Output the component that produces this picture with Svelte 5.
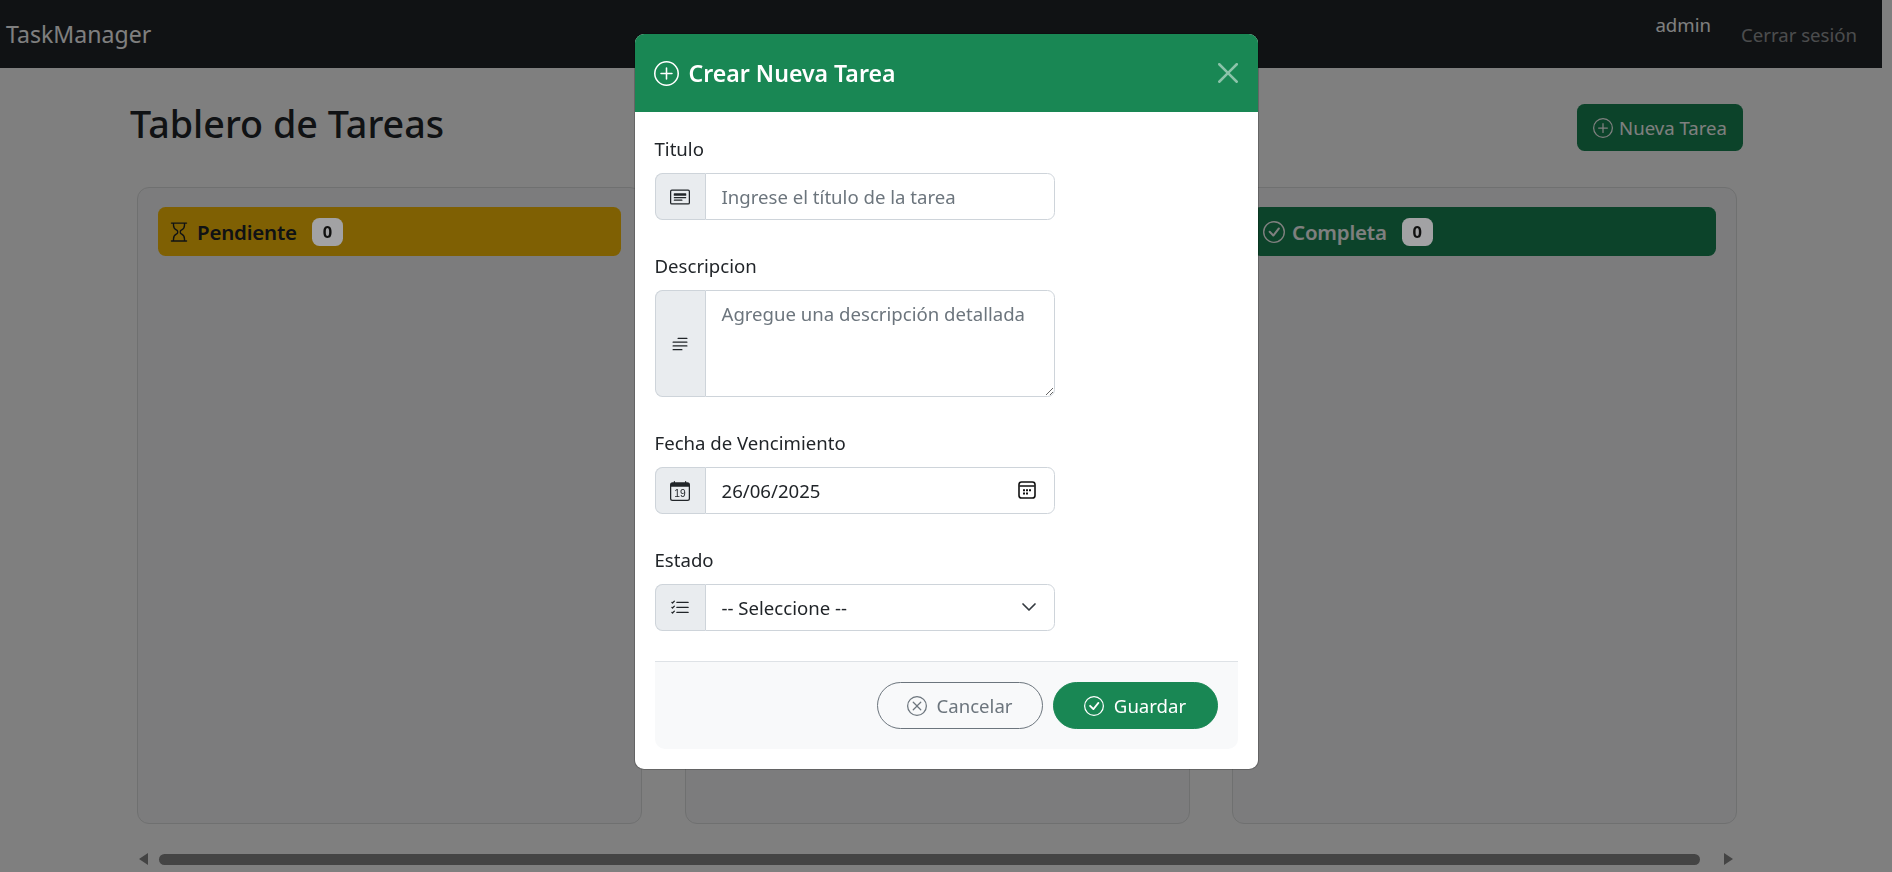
<script>
  const columns = [
    { name: 'Pendiente', tone: 'pending', icon: 'hourglass' },
    { name: 'En Progreso', tone: 'progress', icon: 'hourglass' },
    { name: 'Completa', tone: 'done', icon: 'check' }
  ];
</script>

{#snippet plusCircle()}
  <svg class="bi" viewBox="0 0 16 16" fill="currentColor" aria-hidden="true">
    <path d="M8 15A7 7 0 1 1 8 1a7 7 0 0 1 0 14zm0 1A8 8 0 1 0 8 0a8 8 0 0 0 0 16z"/>
    <path d="M8 4a.5.5 0 0 1 .5.5v3h3a.5.5 0 0 1 0 1h-3v3a.5.5 0 0 1-1 0v-3h-3a.5.5 0 0 1 0-1h3v-3A.5.5 0 0 1 8 4z"/>
  </svg>
{/snippet}

{#snippet checkCircle()}
  <svg class="bi" viewBox="0 0 16 16" fill="currentColor" aria-hidden="true">
    <path d="M8 15A7 7 0 1 1 8 1a7 7 0 0 1 0 14zm0 1A8 8 0 1 0 8 0a8 8 0 0 0 0 16z"/>
    <path d="M10.97 4.97a.235.235 0 0 0-.02.022L7.477 9.417 5.384 7.323a.75.75 0 0 0-1.06 1.06L6.97 11.03a.75.75 0 0 0 1.079-.02l3.992-4.99a.75.75 0 0 0-1.071-1.05z"/>
  </svg>
{/snippet}

{#snippet xCircle()}
  <svg class="bi" viewBox="0 0 16 16" fill="currentColor" aria-hidden="true">
    <path d="M8 15A7 7 0 1 1 8 1a7 7 0 0 1 0 14zm0 1A8 8 0 1 0 8 0a8 8 0 0 0 0 16z"/>
    <path d="M4.646 4.646a.5.5 0 0 1 .708 0L8 7.293l2.646-2.647a.5.5 0 0 1 .708.708L8.707 8l2.647 2.646a.5.5 0 0 1-.708.708L8 8.707l-2.646 2.647a.5.5 0 0 1-.708-.708L7.293 8 4.646 5.354a.5.5 0 0 1 0-.708z"/>
  </svg>
{/snippet}

{#snippet hourglass()}
  <svg class="bi" viewBox="0 0 16 16" fill="currentColor" aria-hidden="true">
    <path d="M2 1.5a.5.5 0 0 1 .5-.5h11a.5.5 0 0 1 0 1h-1v1a4.5 4.5 0 0 1-2.557 4.06c-.29.139-.443.377-.443.59v.7c0 .213.154.451.443.59A4.5 4.5 0 0 1 12.5 13v1h1a.5.5 0 0 1 0 1h-11a.5.5 0 1 1 0-1h1v-1a4.5 4.5 0 0 1 2.557-4.06c.29-.139.443-.377.443-.59v-.7c0-.213-.154-.451-.443-.59A4.5 4.5 0 0 1 3.5 3V2h-1a.5.5 0 0 1-.5-.5zm2.5.5v1a3.5 3.5 0 0 0 1.989 3.158c.533.256 1.011.791 1.011 1.491v.702c0 .7-.478 1.235-1.011 1.491A3.5 3.5 0 0 0 4.5 13v1h7v-1a3.5 3.5 0 0 0-1.989-3.158C8.978 9.586 8.5 9.052 8.5 8.351v-.702c0-.7.478-1.235 1.011-1.491A3.5 3.5 0 0 0 11.5 3V2h-7z"/>
  </svg>
{/snippet}

<div class="page">
  <nav class="navbar">
    <span class="brand">TaskManager</span>
    <div class="nav-right">
      <span class="user">admin</span>
      <span class="logout">Cerrar sesión</span>
    </div>
  </nav>

  <main class="content">
    <div class="title-row">
      <h1>Tablero de Tareas</h1>
      <button class="new-task" type="button">{@render plusCircle()} Nueva Tarea</button>
    </div>

    <div class="board">
      {#each columns as col}
        <section class="column">
          <header class="col-head {col.tone}">
            {#if col.icon === 'check'}{@render checkCircle()}{:else}{@render hourglass()}{/if}
            <span class="col-name">{col.name}</span>
            <span class="badge">0</span>
          </header>
        </section>
      {/each}
    </div>

    <div class="scrollbar" aria-hidden="true">
      <span class="arrow left"></span>
      <span class="thumb"></span>
      <span class="arrow right"></span>
    </div>
  </main>
</div>

<div class="backdrop"></div>

<div class="modal-wrap">
  <div class="modal">
    <div class="modal-head">
      <h2>{@render plusCircle()} Crear Nueva Tarea</h2>
      <svg class="close" viewBox="0 0 16 16" fill="currentColor" aria-label="Cerrar">
        <path d="M.293.293a1 1 0 0 1 1.414 0L8 6.586 14.293.293a1 1 0 1 1 1.414 1.414L9.414 8l6.293 6.293a1 1 0 0 1-1.414 1.414L8 9.414l-6.293 6.293a1 1 0 0 1-1.414-1.414L6.586 8 .293 1.707a1 1 0 0 1 0-1.414z"/>
      </svg>
    </div>
    <form class="modal-body">
      <div class="field">
        <label for="t">Titulo</label>
        <div class="group">
          <span class="addon">
            <svg class="bi" viewBox="0 0 16 16" fill="currentColor" aria-hidden="true">
              <path d="M14.5 3a.5.5 0 0 1 .5.5v9a.5.5 0 0 1-.5.5h-13a.5.5 0 0 1-.5-.5v-9a.5.5 0 0 1 .5-.5h13zm-13-1A1.5 1.5 0 0 0 0 3.5v9A1.5 1.5 0 0 0 1.5 14h13a1.5 1.5 0 0 0 1.5-1.5v-9A1.5 1.5 0 0 0 14.5 2h-13z"/>
              <path d="M3 8.5a.5.5 0 0 1 .5-.5h9a.5.5 0 0 1 0 1h-9a.5.5 0 0 1-.5-.5zm0 2a.5.5 0 0 1 .5-.5h6a.5.5 0 0 1 0 1h-6a.5.5 0 0 1-.5-.5zm0-5a.5.5 0 0 1 .5-.5h9a.5.5 0 0 1 .5.5v1a.5.5 0 0 1-.5.5h-9a.5.5 0 0 1-.5-.5v-1z"/>
            </svg>
          </span>
          <input id="t" class="control" type="text" placeholder="Ingrese el título de la tarea" />
        </div>
      </div>

      <div class="field">
        <label for="d">Descripcion</label>
        <div class="group">
          <span class="addon">
            <svg class="bi" viewBox="0 0 16 16" fill="currentColor" aria-hidden="true">
              <path fill-rule="evenodd" d="M2 12.5a.5.5 0 0 1 .5-.5h7a.5.5 0 0 1 0 1h-7a.5.5 0 0 1-.5-.5zm0-3a.5.5 0 0 1 .5-.5h11a.5.5 0 0 1 0 1h-11a.5.5 0 0 1-.5-.5zm0-3a.5.5 0 0 1 .5-.5h11a.5.5 0 0 1 0 1h-11a.5.5 0 0 1-.5-.5zm4-3a.5.5 0 0 1 .5-.5h7a.5.5 0 0 1 0 1h-7a.5.5 0 0 1-.5-.5z"/>
            </svg>
          </span>
          <textarea id="d" class="control area" placeholder="Agregue una descripción detallada"></textarea>
        </div>
      </div>

      <div class="field">
        <label for="f">Fecha de Vencimiento</label>
        <div class="group">
          <span class="addon">
            <svg class="bi" viewBox="0 0 16 16" fill="currentColor" aria-hidden="true">
              <path d="M3.5 0a.5.5 0 0 1 .5.5V1h8V.5a.5.5 0 0 1 1 0V1h1a2 2 0 0 1 2 2v11a2 2 0 0 1-2 2H2a2 2 0 0 1-2-2V3a2 2 0 0 1 2-2h1V.5a.5.5 0 0 1 .5-.5zM1 4.5V14a1 1 0 0 0 1 1h12a1 1 0 0 0 1-1V4.5H1z"/>
              <text x="8" y="12.9" text-anchor="middle" class="cal-day">19</text>
            </svg>
          </span>
          <div class="control-wrap">
            <input id="f" class="control" type="text" value="26/06/2025" />
            <svg class="picker" viewBox="0 0 18 18" aria-hidden="true">
              <rect x="1" y="1" width="16" height="16" rx="2.6" fill="none" stroke="#111" stroke-width="1.6"/>
              <path d="M1.5 5h15" stroke="#111" stroke-width="1.5"/>
              <path d="M5 8.2h2v2H5zM8 8.2h2v2H8zM11 8.2h2v2h-2zM5 11.4h2v2H5zM8 11.4h2v2H8z" fill="#111"/>
            </svg>
          </div>
        </div>
      </div>

      <div class="field">
        <label for="s">Estado</label>
        <div class="group">
          <span class="addon">
            <svg class="bi" viewBox="0 0 16 16" fill="currentColor" aria-hidden="true">
              <path fill-rule="evenodd" d="M5 11.5a.5.5 0 0 1 .5-.5h9a.5.5 0 0 1 0 1h-9a.5.5 0 0 1-.5-.5zm0-4a.5.5 0 0 1 .5-.5h9a.5.5 0 0 1 0 1h-9a.5.5 0 0 1-.5-.5zm0-4a.5.5 0 0 1 .5-.5h9a.5.5 0 0 1 0 1h-9a.5.5 0 0 1-.5-.5zM3.854 2.146a.5.5 0 0 1 0 .708l-1.5 1.5a.5.5 0 0 1-.708 0l-.5-.5a.5.5 0 1 1 .708-.708L2 3.293l1.146-1.147a.5.5 0 0 1 .708 0zm0 4a.5.5 0 0 1 0 .708l-1.5 1.5a.5.5 0 0 1-.708 0l-.5-.5a.5.5 0 1 1 .708-.708L2 7.293l1.146-1.147a.5.5 0 0 1 .708 0zm0 4a.5.5 0 0 1 0 .708l-1.5 1.5a.5.5 0 0 1-.708 0l-.5-.5a.5.5 0 0 1 .708-.708l.146.147 1.146-1.147a.5.5 0 0 1 .708 0z"/>
            </svg>
          </span>
          <div class="control-wrap">
            <select id="s" class="control select">
              <option>-- Seleccione --</option>
            </select>
            <svg class="chevron" viewBox="0 0 16 16" aria-hidden="true">
              <path d="M2 5l6 6 6-6" fill="none" stroke="#343a40" stroke-width="1.7" stroke-linecap="round" stroke-linejoin="round"/>
            </svg>
          </div>
        </div>
      </div>

      <div class="footer">
        <button class="pill cancel" type="button">{@render xCircle()} Cancelar</button>
        <button class="pill save" type="button">{@render checkCircle()} Guardar</button>
      </div>
    </form>
  </div>
</div>

<style>
  :global(body) {
    margin: 0;
    background: #fff;
    font-family: "Noto Sans", "Open Sans", sans-serif;
    font-size: 18.6px;
    line-height: 30px;
    color: #212529;
    overflow: hidden;
  }

  .page {
    width: 1882px;
    height: 872px;
    overflow: hidden;
  }

  .navbar {
    display: flex;
    justify-content: space-between;
    align-items: flex-start;
    height: 68px;
    box-sizing: border-box;
    padding: 10px 15px 0 6px;
    background: #212529;
  }

  .brand {
    font-size: 23.1px;
    line-height: 48px;
    color: #fff;
  }

  .nav-right {
    display: flex;
    align-items: flex-start;
  }

  .user {
    color: #fff;
    margin-right: 20px;
  }

  .logout {
    color: rgba(255, 255, 255, 0.55);
    padding: 10px;
  }

  .content {
    padding: 36px 139px 0 130px;
  }

  .title-row {
    display: flex;
    justify-content: space-between;
    align-items: flex-start;
    height: 47px;
  }

  h1 {
    margin: 0;
    font-size: 37.7px;
    line-height: 40px;
    font-weight: 500;
  }

  .new-task {
    display: inline-flex;
    align-items: center;
    gap: 6px;
    height: 47px;
    padding: 0 16px;
    border: 0;
    border-radius: 7.5px;
    background: #198754;
    color: #fff;
    font: inherit;
  }

  .bi {
    width: 20px;
    height: 20px;
    flex: none;
  }

  .board {
    display: flex;
    gap: 42.5px;
    margin: 36px 0 0 7px;
  }

  .column {
    width: 505px;
    height: 637px;
    box-sizing: border-box;
    padding: 19px 20px 20px;
    background: #f8f9fa;
    border: 1px solid #dfe0e1;
    border-radius: 12px;
  }

  .col-head {
    display: flex;
    align-items: center;
    gap: 7px;
    height: 49px;
    padding: 0 10px;
    border-radius: 7.5px;
    font-size: 20.5px;
    font-weight: 600;
    letter-spacing: -0.2px;
  }

  .col-head .bi {
    width: 22px;
    height: 22px;
  }

  .pending { background: #ffc107; color: #212529; }
  .progress { background: #0dcaf0; color: #212529; }
  .done { background: #198754; color: #fff; }

  .col-name { margin-right: 8px; }

  .badge {
    position: relative;
    z-index: 20;
    display: inline-flex;
    align-items: center;
    justify-content: center;
    width: 31px;
    height: 28px;
    border-radius: 7.5px;
    background: #a2a2a4;
    color: #111;
    font-size: 16.5px;
    font-weight: 700;
    letter-spacing: 0;
  }

  .scrollbar {
    display: flex;
    align-items: center;
    height: 12px;
    margin: 29px 0 0 9px;
  }

  .thumb {
    flex: none;
    width: 1541px;
    height: 11px;
    margin: 0 24px 0 11px;
    border-radius: 6px;
    background: #888;
  }

  .arrow {
    width: 0;
    height: 0;
    border-top: 6px solid transparent;
    border-bottom: 6px solid transparent;
  }

  .arrow.left { border-right: 9px solid #888; }
  .arrow.right { border-left: 9px solid #888; }

  .backdrop {
    position: fixed;
    inset: 0;
    z-index: 10;
    background: rgba(0, 0, 0, 0.5);
  }

  .modal-wrap {
    position: fixed;
    inset: 0;
    z-index: 30;
    display: flex;
    justify-content: center;
    align-items: flex-start;
    padding-top: 33px;
  }

  .modal {
    width: 625px;
    box-sizing: border-box;
    background: #fff;
    border: 1px solid rgba(0, 0, 0, 0.2);
    border-radius: 10px;
    background-clip: padding-box;
    overflow: hidden;
  }

  .modal-head {
    display: flex;
    align-items: center;
    justify-content: space-between;
    height: 78px;
    padding: 0 20px 0 19px;
    background: #198754;
    color: #fff;
  }

  h2 {
    display: flex;
    align-items: center;
    gap: 10px;
    margin: 0;
    font-size: 23.1px;
    font-weight: 600;
  }

  h2 .bi {
    width: 25px;
    height: 25px;
  }

  .close {
    width: 20px;
    height: 20px;
    color: #fff;
    opacity: 0.5;
  }

  .modal-body {
    display: block;
    padding: 22px 20px 20px;
  }

  .field {
    width: 400px;
    margin-bottom: 31px;
  }

  .field:nth-child(4) {
    margin-bottom: 30px;
  }

  label {
    display: block;
    margin-bottom: 9px;
  }

  .group {
    display: flex;
  }

  .addon {
    display: flex;
    align-items: center;
    justify-content: center;
    width: 50px;
    box-sizing: border-box;
    flex: none;
    background: #e9ecef;
    border: 1px solid #ced4da;
    border-right: 0;
    border-radius: 7.5px 0 0 7.5px;
    color: #212529;
  }

  .control-wrap {
    position: relative;
    flex: 1;
    min-width: 0;
    display: flex;
  }

  .control {
    display: block;
    flex: 1;
    min-width: 0;
    width: 100%;
    height: 47px;
    box-sizing: border-box;
    padding: 7.5px 15px 7.5px 16px;
    border: 1px solid #ced4da;
    border-radius: 0 7.5px 7.5px 0;
    background: #fff;
    color: #212529;
    font: inherit;
    outline: 0;
  }

  .control::placeholder {
    color: #6c757d;
    opacity: 1;
  }

  .area {
    height: 107px;
    resize: vertical;
  }

  .select {
    appearance: none;
    -webkit-appearance: none;
  }

  .picker {
    position: absolute;
    right: 19px;
    top: 14px;
    width: 18px;
    height: 18px;
  }

  .chevron {
    position: absolute;
    right: 18px;
    top: 15px;
    width: 16px;
    height: 16px;
  }

  .cal-day {
    font-size: 8.2px;
    font-family: "Liberation Sans", sans-serif;
  }

  .footer {
    display: flex;
    justify-content: flex-end;
    gap: 10px;
    padding: 20px;
    border-top: 1px solid #dee2e6;
    border-radius: 0 0 10px 10px;
    background: #f8f9fa;
  }

  .pill {
    display: inline-flex;
    align-items: center;
    justify-content: center;
    gap: 10px;
    height: 47px;
    box-sizing: border-box;
    border-radius: 24px;
    font: inherit;
  }

  .cancel {
    width: 166px;
    background: transparent;
    border: 1px solid #6c757d;
    color: #6c757d;
  }

  .save {
    width: 165px;
    background: #198754;
    border: 1px solid #198754;
    color: #fff;
  }
</style>
